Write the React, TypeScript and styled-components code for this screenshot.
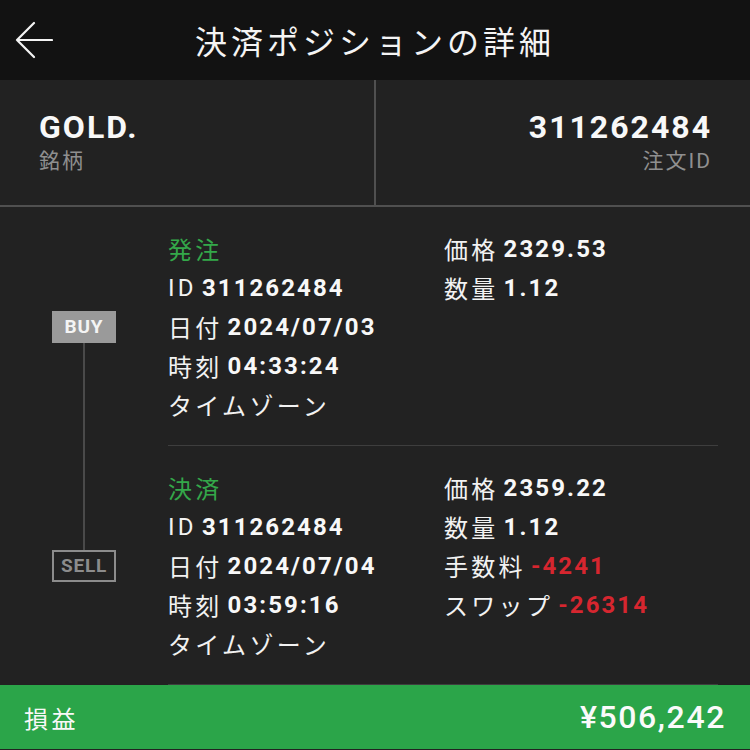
import React from 'react';
import styled, { createGlobalStyle } from 'styled-components';

const GlobalStyle = createGlobalStyle`
  html, body {
    margin: 0;
    padding: 0;
    background: #222222;
  }
  body {
    font-family: Roboto, "Noto Sans CJK JP", sans-serif;
    color: #f2f2f2;
  }
`;

const Screen = styled.div`
  width: 750px;
  height: 750px;
  overflow: hidden;
  background: #222222;
  display: flex;
  flex-direction: column;
`;

const Header = styled.header`
  height: 80px;
  flex: none;
  background: #121212;
  display: grid;
  grid-template-columns: 80px 1fr 80px;
  align-items: center;
`;

const BackButton = styled.button`
  all: unset;
  display: flex;
  align-items: center;
  padding-left: 15px;
  height: 80px;
  cursor: pointer;
`;

const Title = styled.h1`
  margin: 0;
  text-align: center;
  font-size: 32px;
  font-weight: 400;
  letter-spacing: 4px;
  color: #f4f4f4;
`;

const Summary = styled.section`
  flex: none;
  height: 125px;
  border-bottom: 2px solid #505050;
  display: grid;
  grid-template-columns: 1fr 2px 1fr;
`;

const Divider = styled.div`
  background: #505050;
`;

const SummaryCell = styled.div<{ $right?: boolean }>`
  padding: 28px ${p => (p.$right ? '38px' : '0')} 0 ${p => (p.$right ? '0' : '39px')};
  text-align: ${p => (p.$right ? 'right' : 'left')};
`;

const BigValue = styled.div`
  font-size: 32px;
  font-weight: 700;
  line-height: 38px;
  letter-spacing: 2px;
  color: #f8f8f8;
`;

const SmallLabel = styled.div`
  font-size: 21px;
  line-height: 30px;
  letter-spacing: 2px;
  color: #8f8f8f;
`;

const Block = styled.section`
  display: grid;
  grid-template-columns: 168px 1fr;
`;

const Side = styled.div`
  display: flex;
  flex-direction: column;
  align-items: center;
`;

const Spacer = styled.div<{ $h: number }>`
  height: ${p => p.$h}px;
  flex: none;
`;

const Stem = styled.div<{ $h?: number }>`
  width: 2px;
  background: #4a4a4a;
  ${p => (p.$h ? `height: ${p.$h}px; flex: none;` : 'flex: 1;')}
`;

const Badge = styled.div<{ $kind: 'buy' | 'sell' }>`
  width: 64px;
  height: 32px;
  box-sizing: border-box;
  display: flex;
  align-items: center;
  justify-content: center;
  font-size: 19px;
  font-weight: 700;
  letter-spacing: 0.8px;
  background: ${p => (p.$kind === 'buy' ? '#9a9a9a' : 'transparent')};
  color: ${p => (p.$kind === 'buy' ? '#f4f4f4' : '#8c8c8c')};
  border: 2px solid ${p => (p.$kind === 'buy' ? '#9a9a9a' : '#8c8c8c')};
`;

const Body = styled.div`
  margin-right: 32px;
  padding: 22px 0 21px;
  border-bottom: 1px solid #3e3e3e;
  display: grid;
  grid-template-columns: 276px 1fr;
`;

const Column = styled.div`
  display: flex;
  flex-direction: column;
`;

const Line = styled.div<{ $green?: boolean }>`
  height: 39px;
  display: flex;
  align-items: center;
  font-size: 24px;
  letter-spacing: 3.3px;
  white-space: nowrap;
  color: ${p => (p.$green ? '#34a84a' : '#f2f2f2')};
`;

const Value = styled.span<{ $neg?: boolean }>`
  font-weight: 700;
  margin-left: 5px;
  letter-spacing: 2.1px;
  color: ${p => (p.$neg ? '#d6262f' : '#f8f8f8')};
`;

const Footer = styled.footer`
  height: 64px;
  flex: none;
  background: #2ba549;
  display: flex;
  align-items: center;
  justify-content: space-between;
  padding: 0 24px;
`;

const FooterLabel = styled.span`
  font-size: 24px;
  letter-spacing: 3.5px;
  color: #f8f8f8;
`;

const FooterValue = styled.span`
  font-size: 32px;
  font-weight: 500;
  letter-spacing: 1.6px;
  color: #fafafa;
`;

type Item = { label: string; value?: string; neg?: boolean; green?: boolean };

type Leg = {
  kind: 'buy' | 'sell';
  left: Item[];
  right: Item[];
};

const legs: Leg[] = [
  {
    kind: 'buy',
    left: [
      { label: '発注', green: true },
      { label: 'ID', value: '311262484' },
      { label: '日付', value: '2024/07/03' },
      { label: '時刻', value: '04:33:24' },
      { label: 'タイムゾーン' },
    ],
    right: [
      { label: '価格', value: '2329.53' },
      { label: '数量', value: '1.12' },
    ],
  },
  {
    kind: 'sell',
    left: [
      { label: '決済', green: true },
      { label: 'ID', value: '311262484' },
      { label: '日付', value: '2024/07/04' },
      { label: '時刻', value: '03:59:16' },
      { label: 'タイムゾーン' },
    ],
    right: [
      { label: '価格', value: '2359.22' },
      { label: '数量', value: '1.12' },
      { label: '手数料', value: '-4241', neg: true },
      { label: 'スワップ', value: '-26314', neg: true },
    ],
  },
];

// badge sits on the third row: padding + two rows + half the leftover
const BADGE_OFFSET = 22 + 39 * 2 + 3.5;

const renderItems = (items: Item[]) =>
  items.map((it, i) => (
    <Line key={i} $green={it.green}>
      {it.label}
      {it.value && <Value $neg={it.neg}>{it.value}</Value>}
    </Line>
  ));

const BackArrow = () => (
  <svg width="38" height="38" viewBox="0 0 38 38" fill="none">
    <path d="M2 19 H37 M19 2 L2 19 L19 36" stroke="#f4f4f4" strokeWidth="2.2" strokeLinecap="round" strokeLinejoin="round" />
  </svg>
);

export default function App() {
  return (
    <>
      <GlobalStyle />
      <Screen>
        <Header>
          <BackButton aria-label="back">
            <BackArrow />
          </BackButton>
          <Title>決済ポジションの詳細</Title>
          <div />
        </Header>

        <Summary>
          <SummaryCell>
            <BigValue>GOLD.</BigValue>
            <SmallLabel>銘柄</SmallLabel>
          </SummaryCell>
          <Divider />
          <SummaryCell $right>
            <BigValue>311262484</BigValue>
            <SmallLabel>注文ID</SmallLabel>
          </SummaryCell>
        </Summary>

        {legs.map(leg => (
          <Block key={leg.kind}>
            <Side>
              {leg.kind === 'buy' ? (
                <>
                  <Spacer $h={BADGE_OFFSET} />
                  <Badge $kind="buy">BUY</Badge>
                  <Stem />
                </>
              ) : (
                <>
                  <Stem $h={BADGE_OFFSET} />
                  <Badge $kind="sell">SELL</Badge>
                </>
              )}
            </Side>
            <Body>
              <Column>{renderItems(leg.left)}</Column>
              <Column>{renderItems(leg.right)}</Column>
            </Body>
          </Block>
        ))}

        <Footer>
          <FooterLabel>損益</FooterLabel>
          <FooterValue>¥506,242</FooterValue>
        </Footer>
      </Screen>
    </>
  );
}
